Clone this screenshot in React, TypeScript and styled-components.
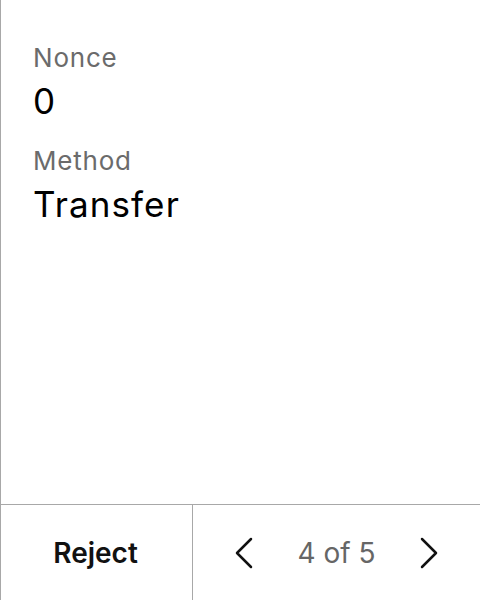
import React from 'react';
import styled, { createGlobalStyle } from 'styled-components';

const GlobalStyle = createGlobalStyle`
  html, body {
    margin: 0;
    padding: 0;
    background: #ffffff;
  }
  body {
    font-family: Inter, "Noto Sans", sans-serif;
  }
`;

const Screen = styled.div`
  width: 480px;
  height: 600px;
  box-sizing: border-box;
  border-left: 1px solid #a8a8a8;
  display: flex;
  flex-direction: column;
`;

const Details = styled.div`
  flex: 1;
  padding: 42px 0 0 32px;
  display: flex;
  flex-direction: column;
  gap: 22px;
`;

const Field = styled.div`
  display: flex;
  flex-direction: column;
  gap: 5px;
`;

const Label = styled.span`
  font-size: 26px;
  line-height: 32px;
  letter-spacing: 0.8px;
  color: #6b6b6b;
`;

const Value = styled.span`
  font-size: 35px;
  line-height: 44px;
  letter-spacing: 1.1px;
  color: #000000;
`;

const Footer = styled.div`
  height: 96px;
  box-sizing: border-box;
  border-top: 1px solid #a8a8a8;
  display: flex;
`;

const RejectButton = styled.button`
  width: 192px;
  border: none;
  border-right: 1px solid #a8a8a8;
  background: transparent;
  font-family: inherit;
  font-size: 28px;
  font-weight: 600;
  color: #111111;
  padding: 0 2px 0 0;
`;

const Pager = styled.div`
  flex: 1;
  display: flex;
  align-items: center;
  justify-content: space-between;
  padding: 0 40px 0 40px;
`;

const NavButton = styled.button`
  border: none;
  background: transparent;
  padding: 0;
  display: flex;
  align-items: center;
  justify-content: center;
`;

const PageCount = styled.span`
  font-size: 28px;
  color: #666666;
`;

const Chevron: React.FC<{ dir: 'left' | 'right' }> = ({ dir }) => (
  <svg width="22" height="34" viewBox="0 0 22 34" fill="none">
    <path
      d={dir === 'left' ? 'M18 3 L4 17 L18 31' : 'M4 3 L18 17 L4 31'}
      stroke="#111"
      strokeWidth="2.5"
      strokeLinecap="round"
      strokeLinejoin="round"
    />
  </svg>
);

const App: React.FC = () => (
  <>
    <GlobalStyle />
    <Screen>
      <Details>
        <Field>
          <Label>Nonce</Label>
          <Value>0</Value>
        </Field>
        <Field>
          <Label>Method</Label>
          <Value>Transfer</Value>
        </Field>
      </Details>
      <Footer>
        <RejectButton>Reject</RejectButton>
        <Pager>
          <NavButton>
            <Chevron dir="left" />
          </NavButton>
          <PageCount>4 of 5</PageCount>
          <NavButton>
            <Chevron dir="right" />
          </NavButton>
        </Pager>
      </Footer>
    </Screen>
  </>
);

export default App;
